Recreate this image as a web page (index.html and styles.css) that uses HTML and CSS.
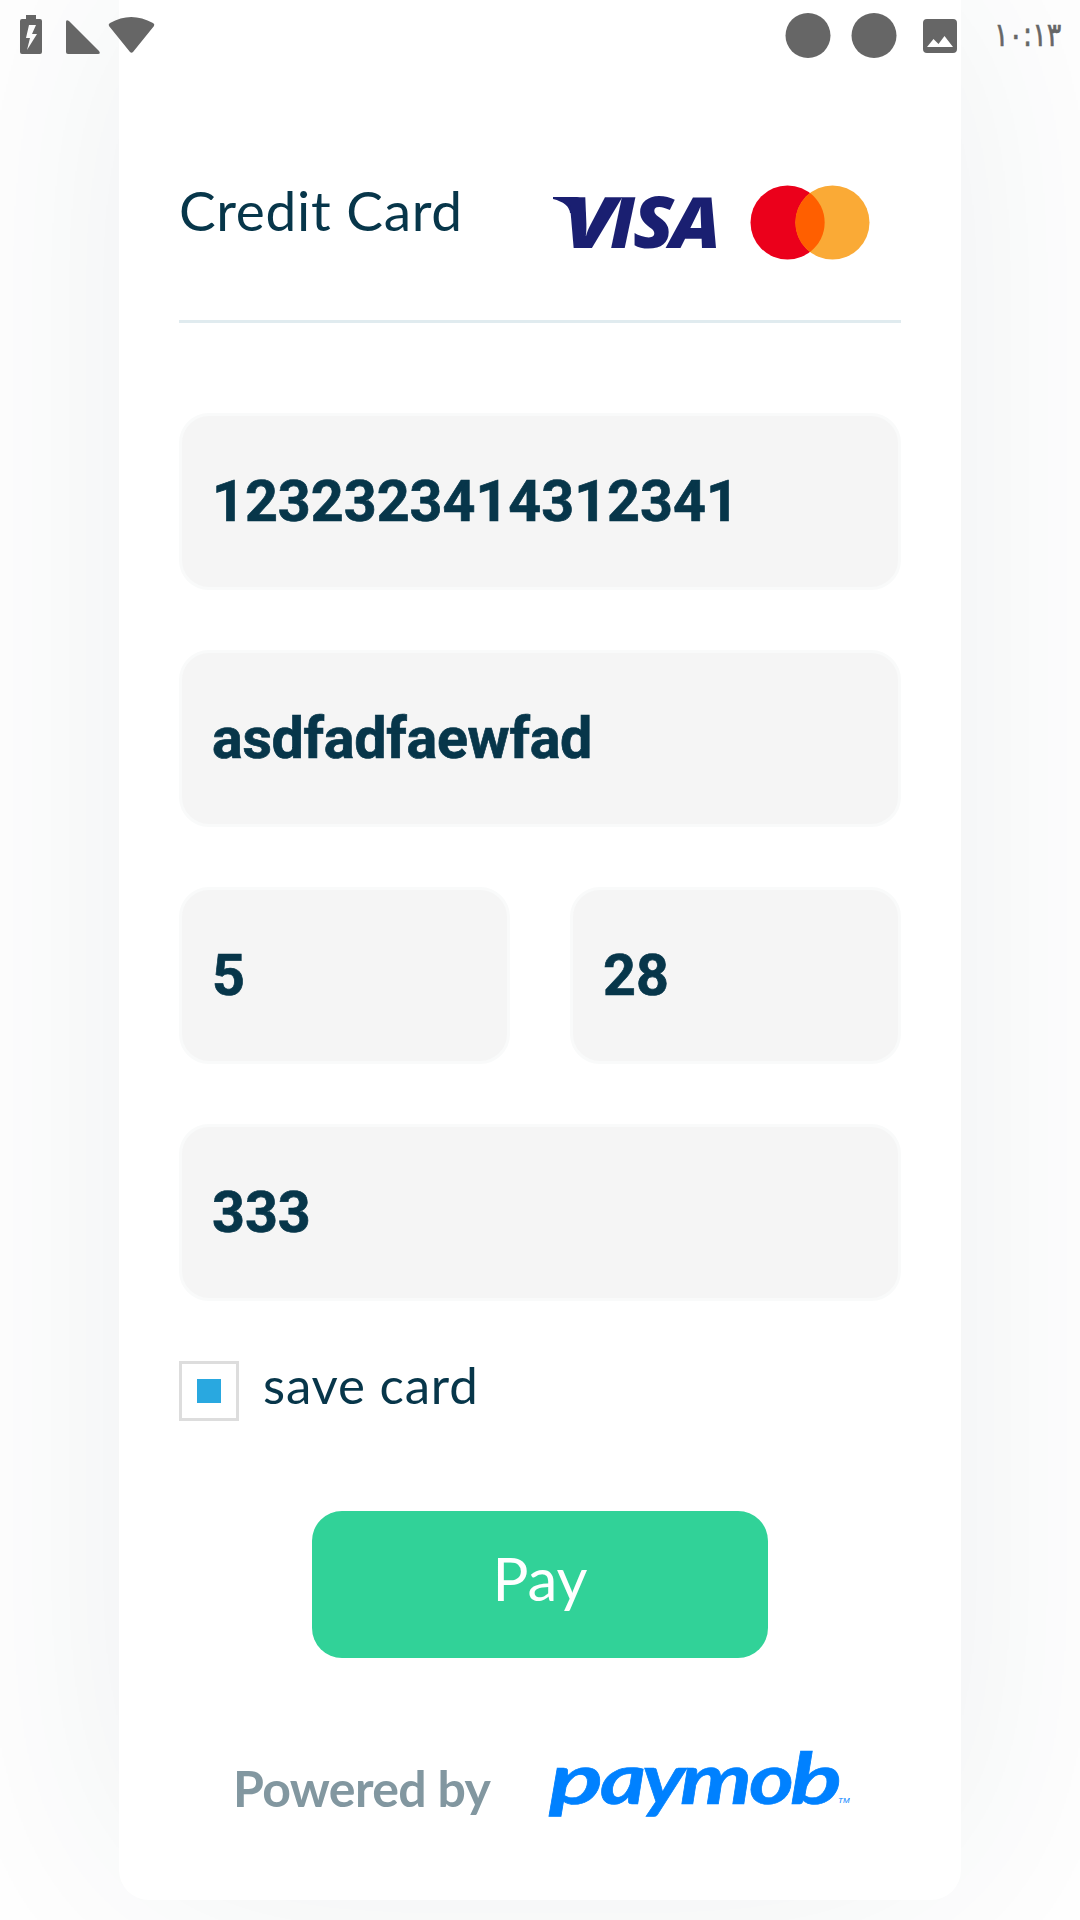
FILE: index.html
```html
<!DOCTYPE html>
<html lang="en">
<head>
<meta charset="utf-8">
<title>Credit Card</title>
<link rel="stylesheet" href="styles.css">
</head>
<body>
<header class="status">
  <svg class="status-left" viewBox="0 0 160 60" fill="#666">
    <path fill-rule="evenodd" d="M26 15h10v4h4q2 0 2 2v31q0 2-2 2H22q-2 0-2-2V21q0-2 2-2h4zM29 25l-3 13h4l-3 12 10-16h-5l4-9z"/>
    <path d="M66 22q0-3 3-1l30 30q2 3-1 3H68q-2 0-2-2z"/>
    <path d="M109 26q-1-2 1-3 21-12 43 0 2 1 1 3l-21 26q-1.500 1.500-3 0z"/>
  </svg>
  <div class="status-right">
    <svg class="notifications" viewBox="0 0 175 60" fill="#666">
      <circle cx="23" cy="35.500" r="22.500"/><circle cx="89" cy="35.500" r="22.500"/>
      <path fill-rule="evenodd" d="M142 19h26q4 0 4 4v26q0 4-4 4h-26q-4 0-4-4V23q0-4 4-4zM142 47h26l-8.500-11-6 8-5-5z"/>
    </svg>
    <span class="clock">١٠:١٣</span>
  </div>
</header>
<main class="card">
  <div class="heading">
    <h1>Credit Card</h1>
    <svg class="brands" viewBox="0 0 320 76" role="img" aria-label="Visa and Mastercard">
      <path fill="#1a1f71" d="M1 12h24q5 1 6 6l3 12-16-2Q17 18 1 14z"/>
      <text class="visa" y="63"><tspan x="11" textLength="53" lengthAdjust="spacingAndGlyphs">V</tspan><tspan x="58">I</tspan><tspan x="81" textLength="41" lengthAdjust="spacingAndGlyphs">S</tspan><tspan x="118" textLength="51" lengthAdjust="spacingAndGlyphs">A</tspan></text>
      <circle cx="235.500" cy="37.500" r="37" fill="#eb001b"/>
      <circle cx="280.500" cy="37.500" r="37" fill="#faaa36"/>
      <path fill="#ff5f00" d="M258 8a37 37 0 0 1 0 59a37 37 0 0 1 0-59z"/>
    </svg>
  </div>
  <form class="form">
    <input class="field" aria-label="Card number" value="1232323414312341">
    <input class="field name" aria-label="Name" value="asdfadfaewfad">
    <div class="expiry">
      <input class="field" aria-label="Month" value="5">
      <input class="field" aria-label="Year" value="28">
    </div>
    <input class="field" aria-label="CVV" value="333">
    <label class="save"><span class="checkbox"></span><span class="save-text">save card</span></label>
    <button class="pay" type="button">Pay</button>
  </form>
  <footer class="powered">
    <span class="powered-text">Powered by</span>
    <svg class="paymob" viewBox="0 0 304 70" fill="#0081ff" role="img" aria-label="Paymob">
      <text class="wordmark" y="54"><tspan x="0" textLength="54" lengthAdjust="spacingAndGlyphs">p</tspan><tspan x="51" textLength="46" lengthAdjust="spacingAndGlyphs">a</tspan><tspan x="93" textLength="43" lengthAdjust="spacingAndGlyphs">y</tspan><tspan x="131" textLength="72" lengthAdjust="spacingAndGlyphs">m</tspan><tspan x="200" textLength="45" lengthAdjust="spacingAndGlyphs">o</tspan><tspan x="241" textLength="52" lengthAdjust="spacingAndGlyphs">b</tspan></text>
      <text class="tm" x="289" y="53">TM</text>
    </svg>
  </footer>
</main>
</body>
</html>
```
FILE: styles.css
```css
* { box-sizing: border-box; }
body {
  margin: 0;
  height: 1920px;
  overflow: hidden;
  background: #fff;
  font-family: Lato, sans-serif;
  color: #07364a;
}
svg { overflow: visible; }
.status {
  position: absolute;
  z-index: 1;
  top: 0;
  left: 0;
  width: 1080px;
  height: 60px;
  display: flex;
  justify-content: space-between;
}
.status-left { width: 160px; height: 60px; }
.status-right { display: flex; width: 295px; gap: 34px; }
.notifications { width: 175px; height: 60px; flex: none; }
.clock {
  font: 33px/70px "DejaVu Sans", sans-serif;
  -webkit-text-stroke: 0.600px #666;
  color: #666;
  direction: ltr;
  unicode-bidi: bidi-override;
  transform: scaleX(.82);
  transform-origin: left;
}
.card {
  width: 842px;
  height: 1900px;
  margin: 0 auto;
  padding: 185px 60px 0;
  border-radius: 0 0 30px 30px;
  background: #fff;
  box-shadow: 0 -20px 300px rgba(20, 50, 60, .08);
}
.heading {
  display: flex;
  justify-content: space-between;
  height: 138px;
  border-bottom: 3px solid #e0ebef;
}
h1 {
  margin: -8px 0 0;
  font-size: 55px;
  line-height: 66px;
  font-weight: 400;
  letter-spacing: .7px;
}
.brands { width: 320px; height: 76px; margin-right: 29px; }
.visa { font: italic 800 71px "Open Sans", sans-serif; fill: #1a1f71; }
.form { display: flex; flex-direction: column; gap: 60px; padding-top: 90px; }
.field {
  width: 100%;
  height: 177px;
  min-width: 0;
  padding: 0 30px;
  border: 3px solid #f9fafa;
  border-radius: 30px;
  background: #f5f5f5;
  color: #07364a;
  font: 700 57.400px Roboto, sans-serif;
  -webkit-text-stroke: 0.700px #07364a;
}
.name { letter-spacing: -.3px; }
.expiry { display: grid; grid-template-columns: 1fr 1fr; gap: 60px; }
.save { display: flex; gap: 24px; height: 60px; }
.checkbox {
  width: 60px;
  height: 60px;
  padding: 15px;
  border: 3px solid #ddd;
  background: #29a8e0 content-box;
}
.save-text { font-size: 51px; line-height: 48px; letter-spacing: .8px; }
.pay {
  align-self: center;
  width: 456px;
  height: 147px;
  margin-top: 30px;
  padding: 0 0 14px;
  border: 0;
  border-radius: 30px;
  background: #31d298;
  color: #fff;
  font: 400 60px Lato, sans-serif;
}
.powered { display: flex; margin-top: 92px; padding-left: 54px; gap: 56px; }
.powered-text {
  width: 260px;
  font-size: 50px;
  line-height: 76px;
  font-weight: 700;
  letter-spacing: -.65px;
  color: #8297a0;
  white-space: nowrap;
}
.paymob { width: 304px; height: 70px; }
.wordmark { font: italic 700 71px Lato, sans-serif; stroke: #0081ff; stroke-width: .6px; }
.tm { font: italic 8px "Liberation Sans", sans-serif; }
```
